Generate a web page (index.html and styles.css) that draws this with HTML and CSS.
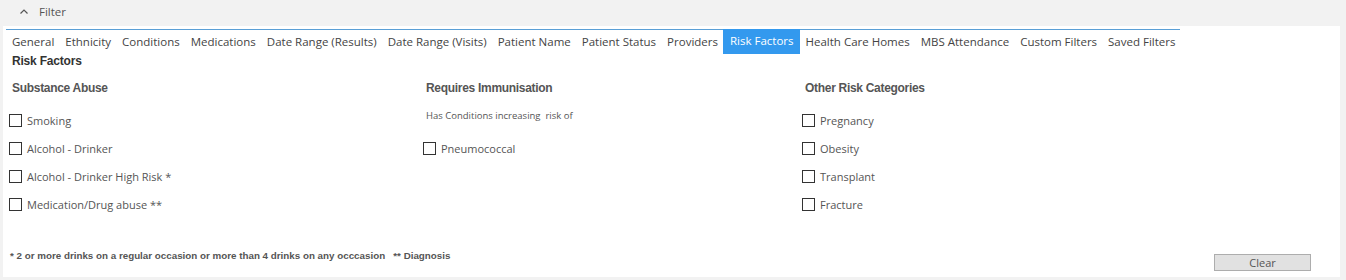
FILE: index.html
```html
<!DOCTYPE html>
<html lang="en">
<head>
    <meta charset="UTF-8">
    <title>Filter - Risk Factors</title>
    <link rel="stylesheet" href="styles.css">
</head>
<body>
    <div class="filter-bar">
        <svg class="caret" width="8" height="5" viewBox="0 0 8 5"><path d="M0.5 4.5 L4 1 L7.5 4.5" fill="none" stroke="#555" stroke-width="1.2"/></svg>
        <span>Filter</span>
    </div>
    <div class="panel">
        <div class="tabs">
            <span class="tab">General</span>
            <span class="tab">Ethnicity</span>
            <span class="tab">Conditions</span>
            <span class="tab">Medications</span>
            <span class="tab">Date Range (Results)</span>
            <span class="tab">Date Range (Visits)</span>
            <span class="tab">Patient Name</span>
            <span class="tab">Patient Status</span>
            <span class="tab">Providers</span>
            <span class="tab active">Risk Factors</span>
            <span class="tab">Health Care Homes</span>
            <span class="tab">MBS Attendance</span>
            <span class="tab">Custom Filters</span>
            <span class="tab">Saved Filters</span>
        </div>
        <h2 class="title">Risk Factors</h2>
        <div class="columns">
            <div class="col">
                <h3>Substance Abuse</h3>
                <label class="check"><input type="checkbox"> Smoking</label>
                <label class="check"><input type="checkbox"> Alcohol - Drinker</label>
                <label class="check"><input type="checkbox"> Alcohol - Drinker High Risk *</label>
                <label class="check"><input type="checkbox"> Medication/Drug abuse **</label>
            </div>
            <div class="col">
                <h3>Requires Immunisation</h3>
                <div class="note">Has Conditions increasing&nbsp; risk of</div>
                <label class="check"><input type="checkbox"> Pneumococcal</label>
            </div>
            <div class="col">
                <h3>Other Risk Categories</h3>
                <label class="check"><input type="checkbox"> Pregnancy</label>
                <label class="check"><input type="checkbox"> Obesity</label>
                <label class="check"><input type="checkbox"> Transplant</label>
                <label class="check"><input type="checkbox"> Fracture</label>
            </div>
        </div>
        <div class="footer">
            <p class="footnote">* 2 or more drinks on a regular occasion or more than 4 drinks on any occcasion &nbsp; ** Diagnosis</p>
            <button class="clear-btn">Clear</button>
        </div>
    </div>
</body>
</html>
```

FILE: styles.css
```css
*{
    box-sizing: border-box;
}
html, body{
    margin: 0;
    padding: 0;
    background-color: #f2f2f2;
    font-family: "Open Sans", sans-serif;
    color: #444;
}
.filter-bar{
    height: 26px;
    display: flex;
    align-items: center;
    padding: 0 0 4px 20px;
    font-size: 11.5px;
    color: #555;
}
.caret{
    margin-right: 11px;
}
.panel{
    background: white;
    margin: 0 6px 0 3px;
    height: 251px;
    display: flex;
    flex-direction: column;
}
.tabs{
    display: inline-flex;
    align-self: flex-start;
    margin: 3px 0 0 3px;
    border-top: 1px solid #5a9fd6;
}
.tab{
    padding: 0 5px 0 6px;
    height: 24px;
    line-height: 24px;
    font-size: 11.5px;
    color: #444;
}
.tab.active{
    background-color: #3399ee;
    color: white;
    margin-top: -1px;
    height: 25px;
    padding: 0 6px 0 7px;
}
.title{
    margin: 0 0 0 9px;
    font-family: "Liberation Sans", Arial, sans-serif;
    font-size: 12px;
    font-weight: bold;
    color: #333;
    height: 14px;
    line-height: 14px;
    letter-spacing: -0.2px;
}
.columns{
    display: grid;
    grid-template-columns: 414px 379px 1fr;
    margin: 13px 0 0 6px;
}
.col h3{
    margin: 0 0 10px 3px;
    font-family: "Liberation Sans", Arial, sans-serif;
    font-size: 12px;
    font-weight: bold;
    color: #555;
    height: 15px;
    line-height: 15px;
    letter-spacing: -0.3px;
}
.check{
    display: flex;
    align-items: center;
    height: 28px;
    font-size: 11px;
    color: #555;
}
.check input{
    appearance: none;
    width: 13px;
    height: 13px;
    margin: 0 5px 0 0;
    border: 1px solid #333;
    background: white;
}
.note{
    height: 28px;
    line-height: 18px;
    padding: 1px 0 0 3px;
    font-size: 9.5px;
    color: #555;
}
.footer{
    margin-top: auto;
    display: flex;
    align-items: flex-start;
    justify-content: space-between;
    padding: 0 29px 6px 7px;
}
.footnote{
    margin: 0;
    font-family: "Liberation Sans", Arial, sans-serif;
    font-size: 9.8px;
    font-weight: bold;
    color: #555;
    line-height: 12px;
}
.clear-btn{
    width: 97px;
    height: 17px;
    padding: 0;
    margin-top: 4px;
    background: #e1e1e1;
    border: 1px solid #adadad;
    font-family: "Open Sans", sans-serif;
    font-size: 11px;
    color: #555;
}
```
